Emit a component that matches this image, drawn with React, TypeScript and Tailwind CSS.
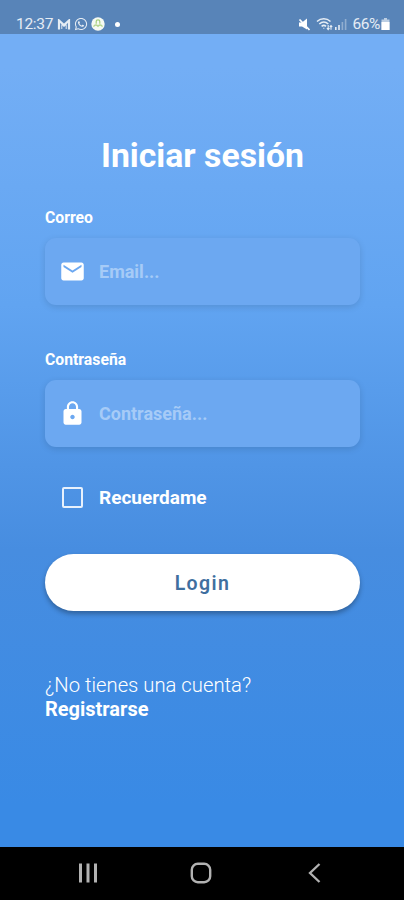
import type { ReactNode } from "react";
import { MdEmail, MdLock } from "react-icons/md";
import { FaWhatsapp } from "react-icons/fa";

function StatusBar() {
  return (
    <header className="flex h-[34px] shrink-0 items-end justify-between bg-[#5884b8] pr-[14px] pb-[2px] pl-4 text-white/85">
      <div className="flex h-4 items-center">
        <span className="w-[41px] text-[15.5px] leading-4 tracking-[-0.3px]">12:37</span>
        <svg className="h-[11px] w-[14px]" viewBox="0 0 14 11" fill="none" stroke="currentColor">
          <path d="M2 10.5V1.5L7 6l5-4.5v9" strokeWidth="2.2" />
          <path d="M4.8 10V5.5L7 7.5l2.2-2V10" strokeWidth="1" />
        </svg>
        <FaWhatsapp className="ml-[3px] size-[14px]" />
        <svg className="ml-[3px] size-[14px]" viewBox="0 0 14 14">
          <circle cx="7" cy="7" r="6.7" fill="#f6faf2" />
          <path d="M5.2 6.8V4.6a1.8 1.8 0 0 1 3.6 0v2.2" fill="none" stroke="#a5cf7c" strokeWidth="1.2" />
          <path d="M2.5 9.6c1.5-2 3-2 4.5-.4 1.5-1.6 3-1.6 4.5.4" fill="none" stroke="#b5d78f" strokeWidth="1.4" />
        </svg>
        <span className="ml-[10px] size-[5px] rounded-full bg-white" />
      </div>
      <div className="flex h-4 items-center">
        <svg className="size-[13px]" viewBox="0 0 13 13" fill="white">
          <path d="M1 4.500h3l5-4v11L4 8.500H1z" />
          <path d="M1.500 1.500l10 10.500" stroke="white" strokeWidth="1.800" />
        </svg>
        <svg className="ml-[5px] h-[14px] w-[17px]" viewBox="0 0 17 14" fill="none" stroke="currentColor" strokeWidth="1.600">
          <path d="M1 4.500c4-3.600 9.500-3.600 13.500 0M3.300 7c2.700-2.400 6.300-2.400 9 0M5.600 9.300c1.400-1.200 3-1.200 4.400 0" />
          <path d="M7.800 10.800v1M12.200 8v4.500M10.900 11.200l1.300 1.400 1.300-1.400M15 12.800V8.500M13.800 9.800L15 8.500l1.200 1.300" strokeWidth="1.100" />
        </svg>
        <svg className="ml-[2px] h-3 w-[12px]" viewBox="0 0 12 12" fill="currentColor">
          <path d="M0 9h1.600v3H0zM3.200 7h1.600v5H3.200z" />
          <path d="M6.600 4h1.600v8H6.600zM9.800 1h1.600v11H9.800z" opacity=".4" />
        </svg>
        <span className="ml-[5px] text-[15.5px] leading-4 tracking-[-0.4px]">66%</span>
        <svg className="ml-px h-3 w-[9px]" viewBox="0 0 9 12" fill="white">
          <path d="M3 0h3v1.500h2.500V12h-8V1.500H3z" opacity=".6" />
          <path d="M.5 4h8v8h-8z" />
        </svg>
      </div>
    </header>
  );
}

function Field({
  label,
  placeholder,
  type,
  icon,
}: {
  label: string;
  placeholder: string;
  type: string;
  icon: ReactNode;
}) {
  return (
    <label className="block">
      <span className="block h-[18px] text-[15.75px] leading-[18px] font-bold">{label}</span>
      <span className="mt-[11px] flex h-[67px] items-center rounded-[11px] bg-[#6ca8f1] pl-[14px] shadow-[0_2px_7px_rgba(0,0,0,0.12)]">
        {icon}
        <input
          type={type}
          placeholder={placeholder}
          className="ml-[13px] w-[230px] bg-transparent pb-px text-[18px] font-bold outline-none placeholder:text-[#a6cbf7]"
        />
      </span>
    </label>
  );
}

// Barra de navegação do Android
function NavigationBar() {
  return (
    <nav className="flex h-[53px] shrink-0 items-center bg-black pb-[2px] pl-[78px] text-[#b2b2b2]">
      <svg className="size-5" viewBox="0 0 20 20" fill="currentColor">
        <path d="M1 .5h3v19H1zM8.500 .5h3v19h-3zM16 .5h3v19h-3z" />
      </svg>
      <svg className="ml-[92px] size-[22px]" viewBox="0 0 22 22" fill="none" stroke="currentColor" strokeWidth="2.400">
        <rect x="1.800" y="1.800" width="18.400" height="18.400" rx="6" />
      </svg>
      <svg className="ml-24 h-5 w-[13px]" viewBox="0 0 13 20" fill="none" stroke="currentColor" strokeWidth="2.300">
        <path d="M11.500 1L2 10l9.500 9" />
      </svg>
    </nav>
  );
}

export default function App() {
  return (
    <div className="flex h-[900px] w-[404px] flex-col overflow-hidden bg-[linear-gradient(to_bottom,#73aef5_8%,#61a4f1_36%,#478de0_65%,#398ae5_95%)] bg-[length:100%_847px] bg-no-repeat font-['Roboto',sans-serif] text-white">
      <StatusBar />
      <main className="flex-1 pr-11 pl-[45px]">
        <h1 className="mt-[102px] text-center text-[33.75px] leading-10 font-bold">Iniciar sesión</h1>
        <form className="mt-[33px]" onSubmit={(e) => e.preventDefault()}>
          <Field label="Correo" type="email" placeholder="Email..." icon={<MdEmail className="size-[27px]" />} />
          <div className="mt-[46px]">
            <Field label="Contraseña" type="password" placeholder="Contraseña..." icon={<MdLock className="size-[27px]" />} />
          </div>
          <label className="mt-[38px] flex h-6 items-center pl-[17px]">
            <input type="checkbox" className="size-[21px] appearance-none rounded-[2px] border-[2.5px] border-[#e8f1fc]" />
            <span className="ml-4 pt-[2px] text-[19px] font-bold">Recuerdame</span>
          </label>
          <button className="mt-[45px] block h-[57px] w-full rounded-full bg-white pt-[2px] text-[19.5px] font-semibold tracking-[1.4px] text-[#3f6f9f] shadow-[0_3px_5px_rgba(0,0,0,0.3)]">
            Login
          </button>
        </form>
        <p className="mt-[62px] text-[20.25px] leading-6 font-light">¿No tienes una cuenta?</p>
        <a href="#" className="block text-[20px] leading-6 font-bold">
          Registrarse
        </a>
      </main>
      <NavigationBar />
    </div>
  );
}
